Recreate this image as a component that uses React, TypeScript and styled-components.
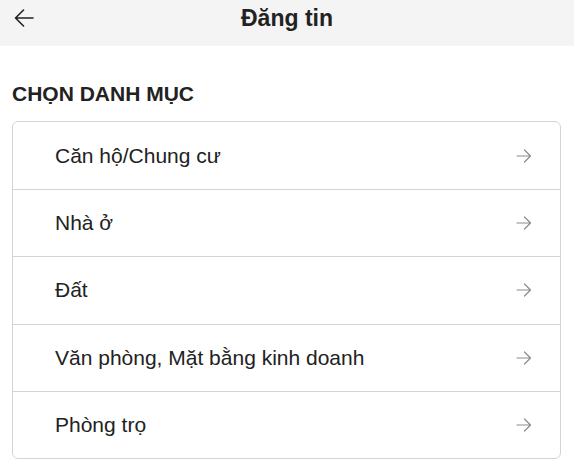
import styled, { createGlobalStyle } from 'styled-components';

const categories = [
  'Căn hộ/Chung cư',
  'Nhà ở',
  'Đất',
  'Văn phòng, Mặt bằng kinh doanh',
  'Phòng trọ',
];

const GlobalStyle = createGlobalStyle`
  * {
    box-sizing: border-box;
  }
  body {
    margin: 0;
    background: #fff;
    font-family: 'Liberation Sans', Arial, Helvetica, sans-serif;
    color: #222;
  }
`;

const Page = styled.div`
  width: 574px;
  min-height: 474px;
  background: #fff;
`;

const Header = styled.header`
  display: grid;
  grid-template-columns: 48px 1fr 48px;
  align-items: center;
  height: 46px;
  padding-bottom: 10px;
  background: #f4f4f4;
`;

const BackButton = styled.button`
  display: flex;
  align-items: center;
  justify-content: center;
  width: 48px;
  height: 36px;
  padding: 0;
  border: none;
  background: transparent;
  color: #222;
  cursor: pointer;
`;

const Title = styled.h1`
  margin: 0;
  text-align: center;
  font-size: 23px;
  font-weight: 700;
  color: #222;
`;

const Section = styled.section`
  padding: 0 13px 0 12px;
`;

const SectionTitle = styled.h2`
  margin: 0;
  padding: 37px 0 16px;
  font-size: 21px;
  line-height: 22px;
  font-weight: 700;
  color: #222;
`;

const Card = styled.ul`
  list-style: none;
  margin: 0;
  padding: 0;
  border: 1px solid #d4d4d4;
  border-radius: 6px;
  overflow: hidden;
`;

const Row = styled.li`
  display: flex;
  align-items: center;
  justify-content: space-between;
  height: 67.2px;
  padding: 0 28px 0 42px;
  font-size: 21px;
  color: #222;
  cursor: pointer;

  & + & {
    border-top: 1px solid #d4d4d4;
  }
`;

const Arrow = () => (
  <svg width="16" height="14" viewBox="0 0 16 14" fill="none">
    <path
      d="M1 7h13.5M8.5 1l6 6-6 6"
      stroke="#8c8c8c"
      strokeWidth="1.2"
      strokeLinecap="round"
      strokeLinejoin="round"
    />
  </svg>
);

const BackArrow = () => (
  <svg width="20" height="18" viewBox="0 0 20 18" fill="none">
    <path
      d="M19 9H1.5M9.5 1 1.5 9l8 8"
      stroke="#222"
      strokeWidth="1.6"
      strokeLinecap="round"
      strokeLinejoin="round"
    />
  </svg>
);

export default function App() {
  return (
    <Page>
      <GlobalStyle />
      <Header>
        <BackButton aria-label="Quay lại">
          <BackArrow />
        </BackButton>
        <Title>Đăng tin</Title>
        <span />
      </Header>
      <Section>
        <SectionTitle>CHỌN DANH MỤC</SectionTitle>
        <Card>
          {categories.map((c) => (
            <Row key={c}>
              <span>{c}</span>
              <Arrow />
            </Row>
          ))}
        </Card>
      </Section>
    </Page>
  );
}
